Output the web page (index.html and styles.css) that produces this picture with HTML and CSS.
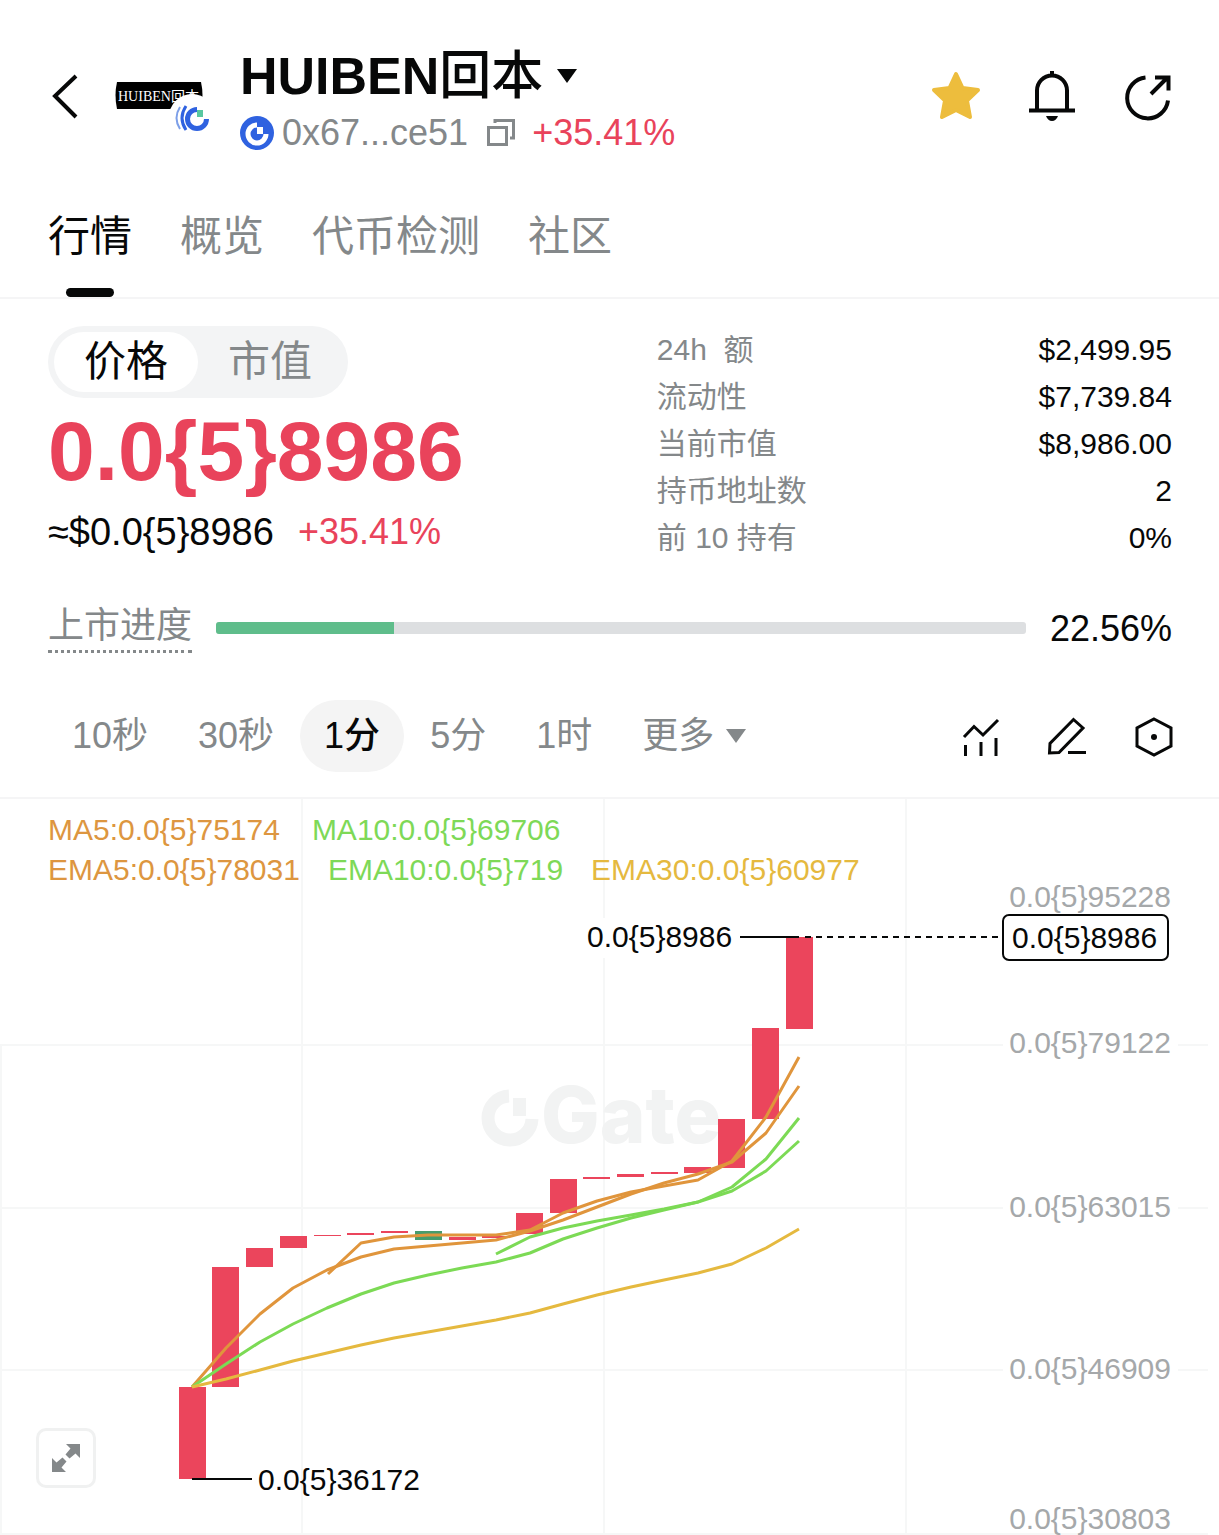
FILE: index.html
```html
<!DOCTYPE html>
<html lang="zh-CN">
<head>
<meta charset="utf-8">
<meta name="viewport" content="width=device-width, initial-scale=1">
<title>HUIBEN回本</title>
<link rel="stylesheet" href="styles.css">
</head>
<body>
<header class="header">
  <button class="icon-btn back" aria-label="返回">
    <svg width="32" height="48" viewBox="0 0 32 48" fill="none" stroke="#070808" stroke-width="4"><path d="M28 4 7 24 28 45"/></svg>
  </button>
  <svg class="token-logo" width="100" height="60" viewBox="112 76 100 60" role="img" aria-label="HUIBEN">
    <path d="M117 82H201Q204 95 201 109H117Q114 95 117 82Z" fill="#000"/>
    <text class="logo-text" x="118" y="101">HUIBEN回本</text>
    <circle cx="192" cy="117" r="23" fill="#fff"/>
    <path d="M197 109.500a9.500 9.500 0 1 0 9.500 9.500" fill="none" stroke="#2f62e0" stroke-width="5"/>
    <rect x="197" y="110" width="6" height="7" fill="#58c7a0"/>
    <path d="M186 106q-8 12 0 24" fill="none" stroke="#2f62e0" stroke-width="3"/>
    <path d="M180 107q-7 11 0 22" fill="none" stroke="#7d9fe8" stroke-width="2"/>
  </svg>
  <div class="token">
    <button class="token-name"><span>HUIBEN<span class="han">回本</span></span>
      <svg width="20" height="14" viewBox="0 0 20 14"><path d="M0 0H20L10 14Z" fill="#070808"/></svg>
    </button>
    <div class="token-meta">
      <svg width="34" height="34" viewBox="0 0 34 34"><circle cx="17" cy="17" r="17" fill="#2f62e0"/><path d="M17 9a9 9 0 1 0 9 9" fill="none" stroke="#fff" stroke-width="5"/><path d="M17 11h6v7h-6z" fill="#fff"/></svg>
      <span class="address">0x67...ce51</span>
      <button class="icon-btn" aria-label="复制"><svg width="30" height="30" viewBox="0 0 30 30" fill="none" stroke="#84888a" stroke-width="3"><path d="M2.500 9.500h18v17h-18zM9 5V2.500h18.500V20H24"/></svg></button>
      <span class="up">+35.41%</span>
    </div>
  </div>
  <div class="actions">
    <button class="icon-btn" aria-label="收藏"><svg width="48" height="48" viewBox="0 0 48 48"><path d="M24 2 30.500 16 46 18 35 28.500 38 45 24 38 10 45 13 28.500 2 18 17.500 16Z" fill="#edbd3d" stroke="#edbd3d" stroke-width="4" stroke-linejoin="round"/></svg></button>
    <button class="icon-btn" aria-label="提醒"><svg width="48" height="48" viewBox="0 0 48 48" fill="none" stroke="#070808" stroke-width="4"><path d="M9 38V18.500a15 15 0 0 1 30 0V38M1 38.500H47M24 4V-1"/><path d="M18 44h12q-2 5-6 5t-6-5z" fill="#070808" stroke="none"/></svg></button>
    <button class="icon-btn" aria-label="分享"><svg width="48" height="48" viewBox="0 0 48 48" fill="none" stroke="#070808" stroke-width="4"><path d="M21.500 5.500a20.500 20.500 0 1 0 22.500 23M27 22 42 7M31 5.500H44.500V18.500"/></svg></button>
  </div>
</header>

<nav class="tabs">
  <a class="tab active" href="#market">行情</a>
  <a class="tab" href="#overview">概览</a>
  <a class="tab" href="#check">代币检测</a>
  <a class="tab" href="#community">社区</a>
</nav>

<main id="market">
  <section class="summary">
    <div class="quote">
      <div class="toggle">
        <button class="toggle-item on" aria-pressed="true">价格</button>
        <button class="toggle-item" aria-pressed="false">市值</button>
      </div>
      <div class="price">0.0{5}8986</div>
      <div class="sub-price"><span class="usd">≈$0.0{5}8986</span><span class="up">+35.41%</span></div>
    </div>
    <dl class="stats">
      <div class="stat"><dt>24h&nbsp; 额</dt><dd>$2,499.95</dd></div>
      <div class="stat"><dt>流动性</dt><dd>$7,739.84</dd></div>
      <div class="stat"><dt>当前市值</dt><dd>$8,986.00</dd></div>
      <div class="stat"><dt>持币地址数</dt><dd>2</dd></div>
      <div class="stat"><dt>前 10 持有</dt><dd>0%</dd></div>
    </dl>
  </section>

  <section class="listing">
    <span class="listing-label" id="listing-label">上市进度</span>
    <div class="bar" role="progressbar" aria-labelledby="listing-label" aria-valuenow="22.56"><div class="bar-fill" style="width:22%"></div></div>
    <span class="listing-value">22.56%</span>
  </section>

  <section class="intervals">
    <button class="interval">10秒</button>
    <button class="interval">30秒</button>
    <button class="interval on">1分</button>
    <button class="interval">5分</button>
    <button class="interval">1时</button>
    <button class="interval more">更多 <svg width="20" height="14" viewBox="0 0 20 14"><path d="M0 0H20L10 14Z" fill="#84888a"/></svg></button>
    <div class="tools">
      <button class="icon-btn" aria-label="指标"><svg width="40" height="40" viewBox="0 0 40 40" fill="none" stroke="#070808" stroke-width="3"><path d="M3 20 13 9.500 22 18 37 3M4.500 28V39M20 25V39M35 21V39"/></svg></button>
      <button class="icon-btn" aria-label="画线"><svg width="40" height="40" viewBox="0 0 40 40" fill="none" stroke="#070808" stroke-width="3"><path d="M26.500 2.500 36 11 12 35.500 2.500 36 3 26.500ZM21 35.500H39"/></svg></button>
      <button class="icon-btn" aria-label="设置"><svg width="40" height="40" viewBox="0 0 40 40" fill="none" stroke="#070808" stroke-width="3"><path d="M21 2 38 11V29L21 38 4 29V11Z"/><circle cx="21" cy="20" r="3" fill="#070808" stroke="none"/></svg></button>
    </div>
  </section>

  <section class="chart">
    <div class="legend">
      <div class="legend-row ma"><span class="c5">MA5:0.0{5}75174</span><span class="c10">MA10:0.0{5}69706</span></div>
      <div class="legend-row"><span class="c5">EMA5:0.0{5}78031</span><span class="c10">EMA10:0.0{5}719</span><span class="c30">EMA30:0.0{5}60977</span></div>
    </div>
    <svg class="plot" viewBox="0 799 1219 736">
      <path class="grid" d="M1 1045V1535M302 799V1535M604 799V1535M906 799V1535M0 1045H1208M0 1208H1208M0 1370H1208M0 1534H1208"/>
      <g class="mark">
        <path d="M509 1096a22 22 0 1 0 23 23" fill="none" stroke-width="13"/>
        <path d="M513 1098h13v18h-13z" stroke="none"/>
        <text x="541" y="1143">Gate</text>
      </g>
      <g class="backing">
        <rect x="1003" y="1025" width="175" height="36"/><rect x="1003" y="1190" width="175" height="36"/><rect x="1003" y="1352" width="175" height="36"/><rect x="1003" y="1504" width="175" height="28"/>
        <rect x="580" y="918" width="150" height="40"/>
      </g>
      <g class="axis">
        <text x="1171" y="907">0.0{5}95228</text>
        <text x="1171" y="1053">0.0{5}79122</text>
        <text x="1171" y="1217">0.0{5}63015</text>
        <text x="1171" y="1379">0.0{5}46909</text>
        <text x="1171" y="1529">0.0{5}30803</text>
      </g>
      <path class="rise" d="M179 1387h27v92h-27zM212 1267h27v120h-27zM246 1248h27v19h-27zM280 1236h27v12h-27zM314 1235h27v1h-27zM347 1233h27v2h-27zM381 1231h27v2h-27zM449 1237h27v3h-27zM482 1236h27v2h-27zM516 1213h27v21h-27zM550 1179h27v34h-27zM583 1177h27v2h-27zM617 1174h27v3h-27zM651 1172h27v2h-27zM684 1167h27v6h-27zM718 1119h27v49h-27zM752 1028h27v91h-27zM786 937h27v92h-27z"/>
      <path class="fall" d="M415 1231h27v9h-27z"/>
      <g class="lines">
        <path class="l5" d="M192 1387 226 1348 260 1314 293 1288 327 1270 361 1257 394 1249 428 1246 462 1243 496 1240 530 1231 563 1220 597 1207 631 1194 664 1183 698 1174 732 1162 766 1133 799 1086"/>
        <path class="l5" d="M328 1274 361 1243 394 1237 428 1235 462 1235 496 1235 530 1230 563 1213 597 1201 631 1192 664 1186 698 1180 732 1161 766 1117 799 1057"/>
        <path class="l10" d="M192 1387 226 1364 260 1342 293 1324 327 1308 361 1294 394 1283 428 1275 462 1268 496 1262 530 1253 563 1239 597 1228 631 1218 664 1210 698 1202 732 1191 766 1171 799 1141"/>
        <path class="l10" d="M496 1254 530 1237 563 1228 597 1221 631 1215 664 1209 698 1202 732 1187 766 1159 799 1118"/>
        <path class="l30" d="M192 1387 226 1379 260 1370 293 1361 327 1353 361 1345 394 1338 428 1332 462 1326 496 1320 530 1313 563 1304 597 1295 631 1287 664 1280 698 1273 732 1264 766 1248 799 1229"/>
      </g>
      <path class="leader" d="M740 937H799M192 1479H252"/>
      <path class="leader dash" d="M805 937H1002"/>
      <rect class="tag" x="1003" y="915" width="165" height="45" rx="6"/>
      <g class="notes">
        <text x="587" y="947">0.0{5}8986</text>
        <text x="1012" y="948">0.0{5}8986</text>
        <text x="258" y="1490">0.0{5}36172</text>
      </g>
    </svg>
    <button class="expand" aria-label="全屏"><svg width="30" height="30" viewBox="0 0 30 30" fill="#84888a"><path d="M15 1H29V15L24.500 10.500 18.500 15.500 14.500 11.500 19.500 5.500ZM15 29H1V15L5.500 19.500 11.500 14.500 15.500 18.500 10.500 24.500Z"/></svg></button>
  </section>
</main>
</body>
</html>
```
FILE: styles.css
```css
* { box-sizing: border-box; }
body {
  margin: 0;
  background: #fff;
  color: #070808;
  font-family: "Liberation Sans", "Noto Sans CJK SC", sans-serif;
  font-size: 36px;
  overflow-x: hidden;
}
button {
  margin: 0;
  padding: 0;
  border: 0;
  background: none;
  color: inherit;
  font: inherit;
}
svg { display: block; flex: none; overflow: visible; }
.icon-btn { display: flex; }
.up { color: #e9435b; }

.header { display: flex; align-items: center; padding: 44px 47px 0 48px; }
.back { margin-bottom: 10px; }
.token-logo { margin: 10px 28px 0 32px; }
.token { flex: 1; }
.token-name {
  display: flex;
  align-items: center;
  gap: 14px;
  font-size: 52px;
  font-weight: 700;
  line-height: 64px;
  white-space: nowrap;
}
.han { font-weight: 500; }
.token-meta { display: flex; align-items: center; gap: 8px; line-height: 50px; }
.token-meta .icon-btn { margin: 0 8px 0 10px; }
.address { color: #84888a; }
.actions { display: flex; gap: 48px; margin-bottom: 10px; }
.logo-text { font: 14px "Liberation Serif", "Noto Sans CJK SC", serif; fill: #fff; }

.tabs {
  display: flex;
  gap: 48px;
  padding: 49px 48px 0;
  border-bottom: 2px solid #f5f5f6;
  font-size: 42px;
  line-height: 60px;
}
.tab {
  display: flex;
  flex-direction: column;
  align-items: center;
  height: 90px;
  color: #84888a;
  text-decoration: none;
}
.active { color: #070808; }
.active::after {
  content: "";
  width: 48px;
  height: 9px;
  margin-top: auto;
  border-radius: 5px;
  background: #070808;
}

.summary { display: flex; padding: 27px 47px 0 48px; }
.quote { flex: 13 1 0; }
.stats { flex: 11 1 0; margin: 0; font-size: 30px; line-height: 47px; }
.toggle {
  display: inline-flex;
  padding: 6px;
  border-radius: 36px;
  background: #f3f4f5;
  font-size: 42px;
  line-height: 60px;
  vertical-align: top;
}
.toggle-item { padding: 0 30px; border-radius: 30px; color: #84888a; }
.toggle-item.on { background: #fff; color: #070808; }
.price { margin-top: 4px; color: #e9435b; font-size: 84px; font-weight: 700; line-height: 98px; }
.sub-price { display: flex; align-items: center; gap: 24px; margin-top: 10px; line-height: 44px; }
.usd { font-size: 38px; }
.stat { display: flex; justify-content: space-between; }
dt { color: #84888a; }
dd { margin: 0; }

.listing { display: flex; align-items: center; gap: 24px; padding: 41px 47px 0 48px; }
.listing-label { border-bottom: 3px dotted #84888a; color: #84888a; line-height: 48px; }
.listing-value { padding-top: 3px; line-height: 48px; }
.bar { flex: 1; height: 12px; border-radius: 3px; background: #dddfe1; overflow: hidden; }
.bar-fill { height: 100%; background: #5fbd8b; }

.intervals {
  display: flex;
  align-items: center;
  gap: 2px;
  padding: 47px 46px 25px 48px;
  border-bottom: 2px solid #f5f5f6;
  line-height: 72px;
}
.interval { padding: 0 24px; border-radius: 36px; color: #84888a; white-space: nowrap; }
.interval.on { background: #f4f4f4; color: #070808; font-weight: 500; }
.more { display: flex; align-items: center; gap: 12px; }
.tools { display: flex; gap: 46px; margin-left: auto; padding-top: 2px; }

.chart { position: relative; }
.plot { width: 100%; height: auto; font-size: 30px; }
.legend { position: absolute; top: 11px; left: 48px; font-size: 30px; line-height: 40px; white-space: nowrap; }
.legend-row { display: flex; gap: 28px; }
.ma { gap: 32px; }
.c5 { color: #dd9640; }
.c10 { color: #7ed957; }
.c30 { color: #e5b93f; }
.grid { fill: none; stroke: #f6f7f7; stroke-width: 2; }
.mark { fill: #f2f3f3; stroke: #f2f3f3; }
.mark text { font: 800 78px Inter, sans-serif; stroke: none; }
.backing { fill: #fff; }
.axis { fill: #a5a8aa; text-anchor: end; }
.rise { fill: #eb455c; }
.fall { fill: #479c6c; }
.lines { fill: none; stroke-width: 3; stroke-linejoin: round; }
.l5 { stroke: #e0953c; }
.l10 { stroke: #7cda55; }
.l30 { stroke: #e5b93f; }
.leader { fill: none; stroke: #070808; stroke-width: 2; }
.dash { stroke-dasharray: 6 5; }
.tag { fill: #fff; stroke: #070808; stroke-width: 2; }
.notes { fill: #070808; }
.expand {
  position: absolute;
  left: 36px;
  bottom: 47px;
  display: flex;
  align-items: center;
  justify-content: center;
  width: 60px;
  height: 60px;
  border: 3px solid #f0f1f1;
  border-radius: 10px;
  background: #fff;
}
```
